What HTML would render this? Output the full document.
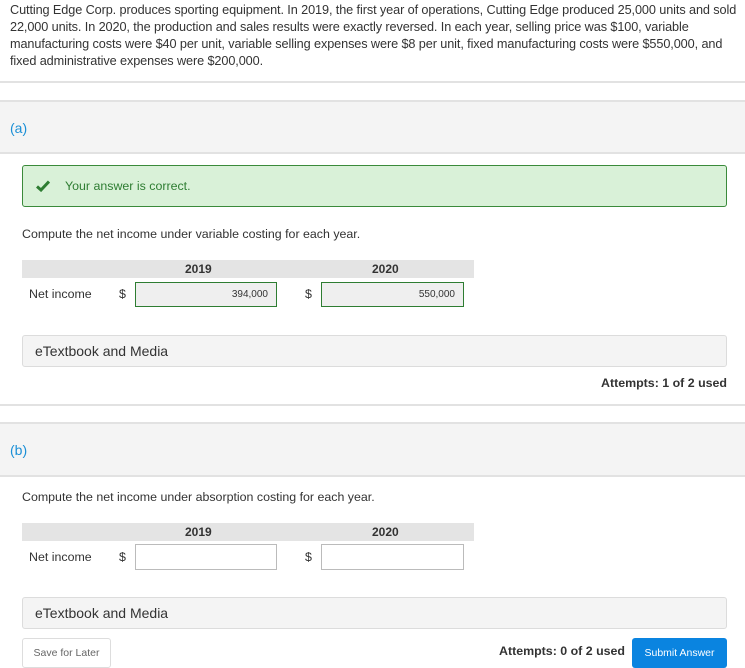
<!DOCTYPE html>
<html><head><style>
body{margin:0;width:745px;height:668px;position:relative;background:#fff;font-family:"Liberation Sans",sans-serif;color:#333;overflow:hidden}
.a{position:absolute;white-space:nowrap}
.p{font-size:12.7px;line-height:17px;left:10px;top:2px;letter-spacing:-0.1px}
.hr{position:absolute;left:0;width:745px;height:0;border-top:2px solid #e2e2e2}
.band{position:absolute;left:0;width:745px;background:#f4f4f4;border-top:2px solid #e2e2e2;border-bottom:2px solid #e2e2e2}
.lbl{font-size:14px;color:#1a8fd6;left:10px}
.s{font-size:12.4px}
.th{position:absolute;left:22px;width:452px;height:18px;background:#e4e4e4;font-size:12px;font-weight:bold}
.in{position:absolute;height:24px;border:1px solid #bbb;background:#fff;font-size:10px;text-align:right;line-height:24px;box-sizing:border-box;padding-right:8px}
.g{background:#efefef;border-color:#2e7d32}
.et{position:absolute;left:22px;width:705px;height:32px;box-sizing:border-box;background:#f4f4f4;border:1px solid #dcdcdc;border-radius:3px;font-size:14px;line-height:30px;padding-left:12px}
</style></head><body>
<div class="a p">Cutting Edge Corp. produces sporting equipment. In 2019, the first year of operations, Cutting Edge produced 25,000 units and sold<br>22,000 units. In 2020, the production and sales results were exactly reversed. In each year, selling price was $100, variable<br>manufacturing costs were $40 per unit, variable selling expenses were $8 per unit, fixed manufacturing costs were $550,000, and<br>fixed administrative expenses were $200,000.</div>
<div class="hr" style="top:81px"></div>
<div class="band" style="top:100px;height:50px"></div>
<div class="a lbl" style="top:120px">(a)</div>
<div style="position:absolute;left:22px;top:165px;width:705px;height:42px;box-sizing:border-box;background:#d9f1d8;border:1px solid #3a8a3a;border-radius:3px"></div>
<svg style="position:absolute;left:36px;top:180px" width="14" height="12" viewBox="0 0 14 12"><path d="M1 6.5 L5 10 L13 1.5" stroke="#2e7d32" stroke-width="3" fill="none"/></svg>
<div class="a s" style="left:65px;top:179px;color:#2e7d32">Your answer is correct.</div>
<div class="a s" style="left:22px;top:227px">Compute the net income under variable costing for each year.</div>
<div class="th" style="top:260px"><span class="a" style="left:163px;top:2px">2019</span><span class="a" style="left:350px;top:2px">2020</span></div>
<div class="a s" style="left:29px;top:287px">Net income</div>
<div class="a s" style="left:119px;top:287px">$</div>
<div class="in g" style="left:135px;top:282px;width:142px;height:25px">394,000</div>
<div class="a s" style="left:305px;top:287px">$</div>
<div class="in g" style="left:321px;top:282px;width:143px;height:25px">550,000</div>
<div class="et" style="top:335px">eTextbook and Media</div>
<div class="a s" style="right:18px;top:376px;font-weight:bold">Attempts: 1 of 2 used</div>
<div class="hr" style="top:404px"></div>
<div class="band" style="top:422px;height:51px"></div>
<div class="a lbl" style="top:442px">(b)</div>
<div class="a s" style="left:22px;top:490px">Compute the net income under absorption costing for each year.</div>
<div class="th" style="top:523px"><span class="a" style="left:163px;top:2px">2019</span><span class="a" style="left:350px;top:2px">2020</span></div>
<div class="a s" style="left:29px;top:550px">Net income</div>
<div class="a s" style="left:119px;top:550px">$</div>
<div class="in" style="left:135px;top:544px;width:142px;height:26px"></div>
<div class="a s" style="left:305px;top:550px">$</div>
<div class="in" style="left:321px;top:544px;width:143px;height:26px"></div>
<div class="et" style="top:597px">eTextbook and Media</div>
<div style="position:absolute;left:22px;top:638px;width:89px;height:30px;box-sizing:border-box;border:1px solid #ddd;border-radius:3px;font-size:10.5px;color:#666;text-align:center;line-height:28px">Save for Later</div>
<div class="a s" style="right:120px;top:644px;font-weight:bold">Attempts: 0 of 2 used</div>
<div style="position:absolute;left:632px;top:638px;width:95px;height:30px;background:#0a84e0;border-radius:3px;font-size:10.5px;color:#fff;text-align:center;line-height:30px">Submit Answer</div>
</body></html>
